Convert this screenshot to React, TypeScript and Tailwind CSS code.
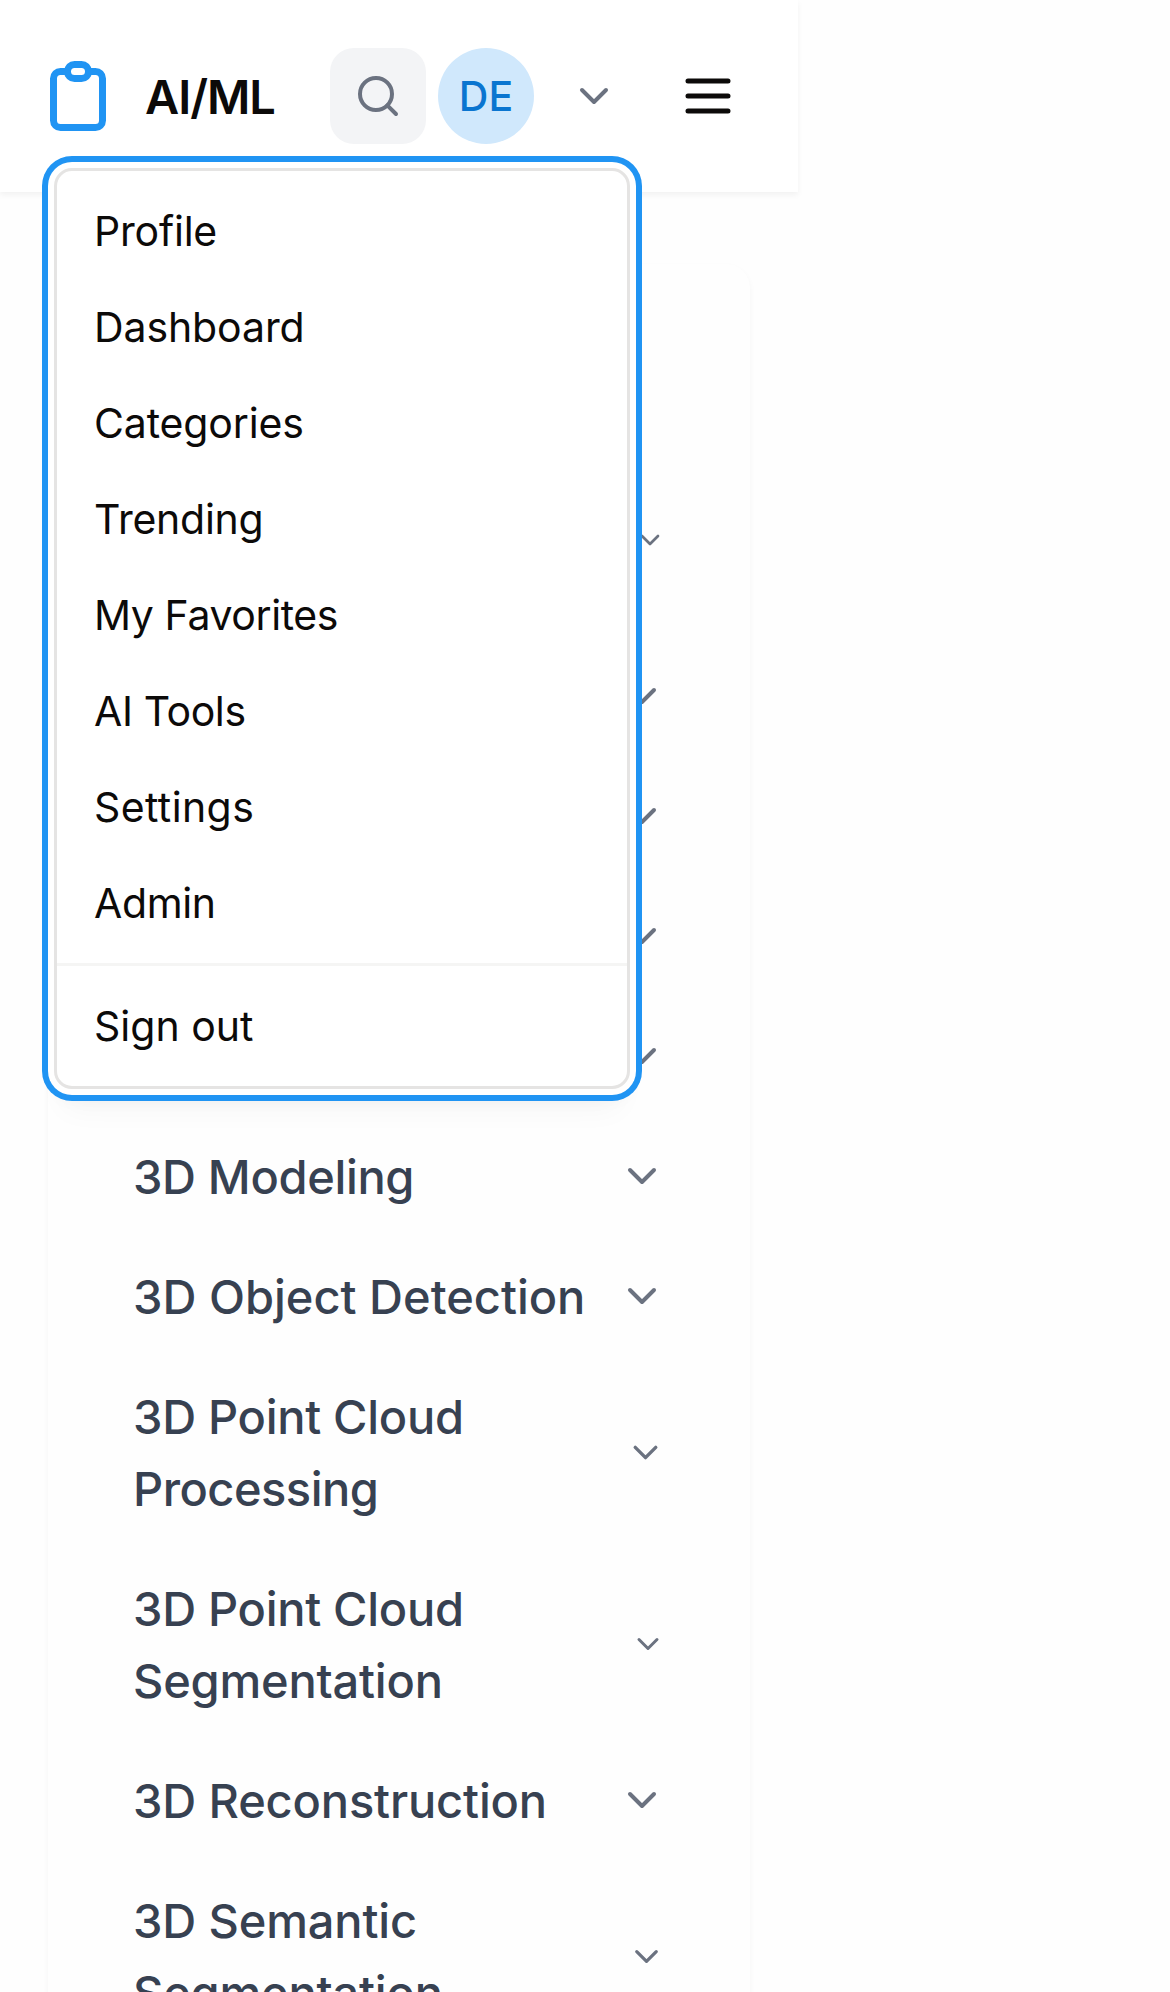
import React from "react";
import { ChevronDown, Search } from "lucide-react";

const menuItems = [
  { label: "Profile", tracking: "tracking-[-0.2px]" },
  { label: "Dashboard", tracking: "tracking-[-0.1px]" },
  { label: "Categories", tracking: "tracking-[-0.15px]" },
  { label: "Trending", tracking: "tracking-[-0.25px]" },
  { label: "My Favorites", tracking: "tracking-[-0.4px]" },
  { label: "AI Tools", tracking: "tracking-[-0.4px]" },
  { label: "Settings", tracking: "tracking-[0.4px]" },
  { label: "Admin", tracking: "tracking-[-0.35px]" },
];

type Line = { text: string; tracking: string };
type Category = { lines: Line[]; chevron: number; tall?: boolean };

const pointCloud: Line = { text: "3D Point Cloud", tracking: "tracking-[-0.3px]" };
const segmentation: Line = { text: "Segmentation", tracking: "tracking-[-0.2px]" };

const categories: Category[] = [
  { lines: [], chevron: 32, tall: true },
  { lines: [], chevron: 48 },
  { lines: [], chevron: 48 },
  { lines: [], chevron: 48 },
  { lines: [], chevron: 48 },
  { lines: [{ text: "3D Modeling", tracking: "tracking-[-0.35px]" }], chevron: 48 },
  { lines: [{ text: "3D Object Detection", tracking: "tracking-normal" }], chevron: 48 },
  { lines: [pointCloud, { text: "Processing", tracking: "tracking-[-0.5px]" }], chevron: 41, tall: true },
  { lines: [pointCloud, segmentation], chevron: 36, tall: true },
  { lines: [{ text: "3D Reconstruction", tracking: "tracking-[-0.15px]" }], chevron: 48 },
  { lines: [{ text: "3D Semantic", tracking: "tracking-[-0.15px]" }, segmentation], chevron: 39, tall: true },
];

function ClipboardLogo() {
  return (
    <svg className="size-[84px] shrink-0 text-[#2094f3]" viewBox="0 0 24 24" fill="none" stroke="currentColor" strokeWidth={2} strokeLinecap="round" strokeLinejoin="round">
      <path d="M9 5H7a2 2 0 00-2 2v12a2 2 0 002 2h10a2 2 0 002-2V7a2 2 0 00-2-2h-2M9 5a2 2 0 002 2h2a2 2 0 002-2M9 5a2 2 0 012-2h2a2 2 0 012 2" />
    </svg>
  );
}

function Header() {
  return (
    <header className="relative flex h-48 w-[798px] items-center bg-white pl-9 shadow-[0_3px_6px_rgba(0,0,0,0.05)]">
      <ClipboardLogo />
      <span className="ml-[25px] w-[185px] whitespace-nowrap pt-0.5 text-[47px] font-semibold leading-[72px] tracking-[-1px] text-[#0c0a09]">
        AI/ML
      </span>
      <button className="flex size-24 items-center justify-center rounded-3xl bg-[#f3f4f6]">
        <Search className="size-12 text-[#6b7280]" strokeWidth={2} />
      </button>
      <span className="ml-3 flex size-24 items-center justify-center rounded-full bg-[#d0e8fc] pt-0.5 text-[41px] font-medium text-[#0a75d0]">
        DE
      </span>
      <ChevronDown className="ml-9 size-12 text-[#6b7280]" strokeWidth={2} />
      <svg className="ml-[60px] size-[60px] text-[#0c0a09]" viewBox="0 0 24 24" fill="none" stroke="currentColor" strokeWidth={2} strokeLinecap="round">
        <path d="M4 6h16M4 12h16M4 18h16" />
      </svg>
      <UserMenu />
    </header>
  );
}

function MenuItem({ label, tracking }: { label: string; tracking: string }) {
  return (
    <a className={`flex h-24 items-center whitespace-nowrap pl-[37px] pr-9 pt-0.5 text-[41px] text-[#0c0a09] ${tracking}`}>
      {label}
    </a>
  );
}

function UserMenu() {
  return (
    <nav className="absolute left-[54px] top-[168px] z-10 w-[576px] rounded-[18px] border-[3px] border-[#e5e4e3] bg-white shadow-[0_0_0_6px_#fff,0_0_0_12px_#2094f3,0_12px_18px_-3px_rgba(0,0,0,0.05),0_30px_30px_-9px_rgba(0,0,0,0.035)]">
      <div className="py-3">
        {menuItems.map((item) => (
          <MenuItem key={item.label} {...item} />
        ))}
      </div>
      <div className="border-t-[3px] border-[#f5f5f4] py-3">
        <MenuItem label="Sign out" tracking="tracking-normal" />
      </div>
    </nav>
  );
}

function CategoryRow({ lines, chevron, tall }: Category) {
  return (
    <div className={`flex shrink-0 items-center justify-between pl-[37px] pr-9 ${tall ? "h-48" : "h-[120px]"}`}>
      <div className="whitespace-nowrap pt-0.5 text-[47px] font-medium leading-[72px] text-[#374151]">
        {lines.map((line) => (
          <div key={line.text} className={line.tracking}>{line.text}</div>
        ))}
      </div>
      <ChevronDown size={chevron} strokeWidth={2} className="shrink-0 text-[#6b7280]" />
    </div>
  );
}

export default function App() {
  return (
    <div className="h-[1992px] w-full overflow-hidden bg-[#fefefe] font-['Inter',sans-serif]">
      <Header />
      <main className="ml-12 mt-[72px] w-[702px] rounded-3xl bg-[#fefefe] px-12 pt-[180px] shadow-[0_3px_6px_rgba(0,0,0,0.04)]">
        {categories.map((category, index) => (
          <CategoryRow key={index} {...category} />
        ))}
      </main>
    </div>
  );
}
